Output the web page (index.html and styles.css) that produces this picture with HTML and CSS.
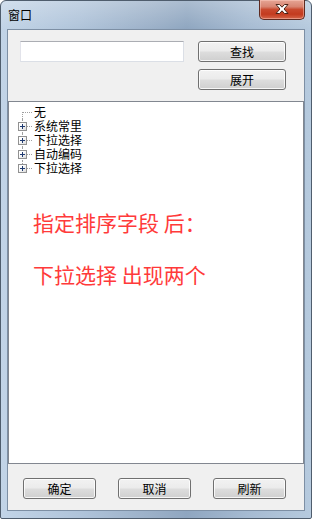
FILE: index.html
```html
<!DOCTYPE html>
<html>
<head>
<meta charset="utf-8">
<link rel="stylesheet" href="styles.css">
</head>
<body>
<div class="window">
  <div class="titlebar">
    <span class="title">窗口</span>
    <div class="close">
      <svg width="16" height="12" viewBox="0 0 16 12">
        <path d="M2 1.5 L5.5 1.5 L8 4.2 L10.5 1.5 L14 1.5 L10 6 L14 10.5 L10.5 10.5 L8 7.8 L5.5 10.5 L2 10.5 L6 6 Z" fill="#fff" stroke="#4a2418" stroke-width="1" stroke-linejoin="round"/>
      </svg>
    </div>
  </div>
  <div class="client">
    <div class="top">
      <div class="edit"></div>
      <button class="btn">查找</button>
      <button class="btn btn-second">展开</button>
    </div>
    <div class="tree">
      <div class="row first"><span class="gutter"></span><span class="label">无</span></div>
      <div class="row mid"><span class="gutter"><span class="box"></span></span><span class="label">系统常里</span></div>
      <div class="row mid"><span class="gutter"><span class="box"></span></span><span class="label">下拉选择</span></div>
      <div class="row mid"><span class="gutter"><span class="box"></span></span><span class="label">自动编码</span></div>
      <div class="row last"><span class="gutter"><span class="box"></span></span><span class="label">下拉选择</span></div>
      <p class="note note-1">指定排序字段 后：</p>
      <p class="note note-2">下拉选择 出现两个</p>
    </div>
    <div class="bottom">
      <button class="btn btn-small">确定</button>
      <button class="btn btn-small">取消</button>
      <button class="btn btn-small">刷新</button>
    </div>
  </div>
</div>
</body>
</html>
```
FILE: styles.css
```css
html, body {
  margin: 0;
  padding: 0;
  background: #fff;
}
body {
  font-family: "Noto Sans CJK SC", "Noto Sans", sans-serif;
  font-size: 12px;
}
.window {
  width: 312px;
  height: 519px;
  box-sizing: border-box;
  border: 1px solid #4f5d6d;
  border-radius: 6px 6px 2px 2px;
  display: flex;
  flex-direction: column;
  padding: 0 6px 7px;
  background:
    linear-gradient(to bottom, rgba(255,255,255,0.25), rgba(255,255,255,0) 28px),
    linear-gradient(to right, #c2d4e7 0%, #b0c4da 25%, #9aafc7 50%, #8fa6c0 60%, #a6bbd2 80%, #b6cade 100%);
}
.titlebar {
  height: 28px;
  flex: none;
  display: flex;
  align-items: flex-start;
  position: relative;
}
.title {
  margin-left: 1px;
  margin-top: 5px;
  line-height: 18px;
  color: #000;
  font-size: 12px;
}
.close {
  position: absolute;
  right: 0;
  top: -1px;
  width: 46px;
  height: 20px;
  box-sizing: border-box;
  border: 1px solid #5e2a20;
  border-top: none;
  border-radius: 0 0 5px 5px;
  background: linear-gradient(to bottom, #e6a595 0%, #d88572 35%, #c9492e 50%, #c33b1f 75%, #d5664a 100%);
  box-shadow: inset 0 0 0 1px rgba(255,210,200,0.45);
  display: flex;
  align-items: center;
  justify-content: center;
}
.close svg { display: block; margin-top: -1px; }
.client {
  flex: 1;
  display: flex;
  flex-direction: column;
  border: 1px solid #7d8fa4;
  background: #f0f0f0;
  min-height: 0;
}
.top {
  height: 71px;
  flex: none;
  box-sizing: border-box;
  padding: 11px 0 0 12px;
  display: grid;
  grid-template-columns: 164px 88px;
  grid-template-rows: 21px 21px;
  column-gap: 14px;
  row-gap: 7px;
}
.edit {
  grid-column: 1;
  grid-row: 1;
  box-sizing: border-box;
  background: #fff;
  border: 1px solid #dbdfe6;
  border-top-color: #abadb3;
  border-left-color: #e2e3ea;
}
.btn {
  font-family: "Noto Sans CJK SC", "Noto Sans", sans-serif;
  font-size: 12px;
  color: #000;
  padding: 0;
  margin: 0;
  box-sizing: border-box;
  height: 21px;
  border: 1px solid #707070;
  border-radius: 3px;
  background: linear-gradient(to bottom, #f2f2f2 0%, #ebebeb 48%, #dddddd 52%, #cfcfcf 100%);
  box-shadow: inset 0 0 0 1px rgba(255,255,255,0.8);
  line-height: 18px;
}
.top .btn { grid-column: 2; grid-row: 1; }
.top .btn-second { grid-row: 2; }
.tree {
  height: 363px;
  flex: none;
  box-sizing: border-box;
  border: 1px solid #828790;
  background: #fff;
  padding-top: 3px;
}
.row {
  height: 14px;
  display: flex;
  align-items: center;
}
.gutter {
  width: 25px;
  height: 14px;
  flex: none;
  position: relative;
}
.gutter::before {
  content: "";
  position: absolute;
  left: 13px;
  border-left: 1px dotted #a0a0a0;
}
.row.first .gutter::before { top: 7px; bottom: 0; }
.row.mid .gutter::before { top: 0; bottom: 0; }
.row.last .gutter::before { top: 0; height: 7px; }
.gutter::after {
  content: "";
  position: absolute;
  left: 13px;
  width: 10px;
  top: 7px;
  border-top: 1px dotted #a0a0a0;
}
.box {
  position: absolute;
  left: 9px;
  top: 3px;
  width: 9px;
  height: 9px;
  box-sizing: border-box;
  border: 1px solid #919191;
  background: linear-gradient(to bottom right, #ffffff 30%, #dcdcdc 100%);
  z-index: 1;
}
.box::before {
  content: "";
  position: absolute;
  left: 1px;
  top: 3px;
  width: 5px;
  height: 1px;
  background: #1f3a70;
}
.box::after {
  content: "";
  position: absolute;
  left: 3px;
  top: 1px;
  width: 1px;
  height: 5px;
  background: #1f3a70;
}
.label {
  line-height: 14px;
  color: #000;
  white-space: nowrap;
}
.note {
  margin: 0;
  padding-left: 24px;
  font-size: 21px;
  line-height: 26px;
  color: #ff3a3a;
  white-space: pre;
}
.note-1 { margin-top: 34px; }
.note-2 { margin-top: 26px; }
.bottom {
  flex: 1;
  display: flex;
  align-items: flex-start;
  padding: 14px 0 0 15px;
  gap: 22px;
}
.btn-small { width: 73px; }
```
